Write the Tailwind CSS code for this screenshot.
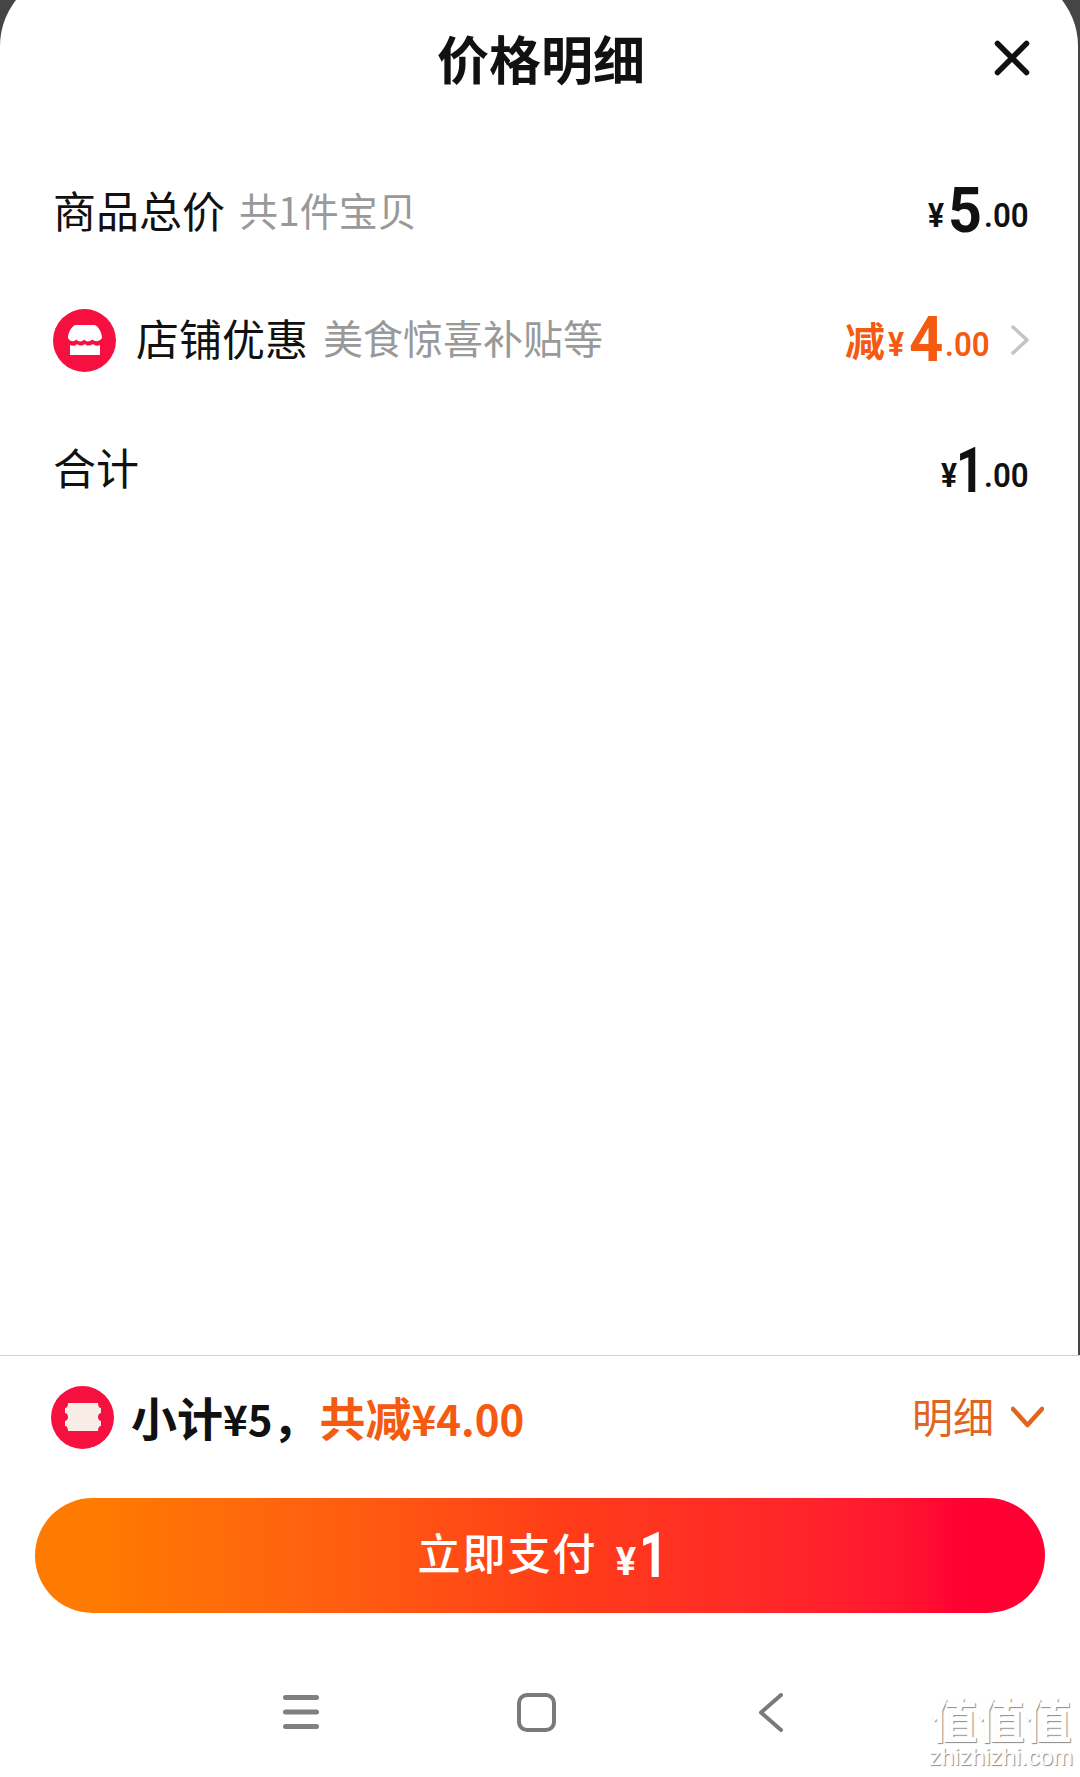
<!DOCTYPE html>
<html lang="zh">
<head>
<meta charset="utf-8">
<script src="https://cdn.jsdelivr.net/npm/@tailwindcss/browser@4"></script>
</head>
<body>
<div class="relative flex h-[1777px] w-[1080px] flex-col overflow-hidden bg-white font-['Noto_Sans_CJK_SC',sans-serif] text-[#111111]">
  <div class="h-[1355px] overflow-hidden bg-[#454545] pr-[2px]">
    <div class="mt-[-28px] flex h-[1383px] flex-col rounded-t-[74px] bg-white pt-[28px] pr-[50px] pl-[53px]">
      <header class="relative flex h-[122px] items-center justify-center pb-[6px]">
        <h1 class="ml-[1px] text-[52px] leading-none font-bold">价格明细</h1>
        <svg class="absolute top-[40px] right-[-2px] h-[36px] w-[36px]" viewBox="0 0 36 36" fill="none" stroke="#111111" stroke-width="5.500" stroke-linecap="round"><path d="M3.500 3.500 32.500 32.500M32.500 3.500 3.500 32.500"/></svg>
      </header>
      <div class="mt-[26px] flex h-[128px] items-center justify-between">
        <div class="flex items-center gap-[14px] pb-[6px]">
          <span class="text-[43px] leading-none">商品总价</span>
          <span class="text-[39px] leading-none text-[#999999]">共1件宝贝</span>
        </div>
        <div class="flex items-end pb-[3px] font-['Roboto',sans-serif] font-bold">
          <span class="mb-[10px] w-[16px] origin-left scale-x-[0.88] text-[34px] leading-none">¥</span>
          <span class="ml-[4px] w-[31px] origin-left scale-x-[0.94] text-[63px] leading-none">5</span>
          <span class="mb-[10px] ml-[5px] w-[44px] origin-left scale-x-[0.92] text-[34px] leading-none font-semibold whitespace-nowrap">.00</span>
        </div>
      </div>
      <div class="flex h-[128px] items-center justify-between">
        <div class="flex items-center">
          <div class="flex h-[63px] w-[63px] items-center justify-center rounded-full bg-[#f5103f]">
            <svg class="h-[36px] w-[36px]" viewBox="0 0 36 36" fill="#ffffff"><path d="M8 3H28C32 5 35 11 35 16 32 20 28 20 25.500 17.500 22 20 19 20 17.500 17.500 15 20 11 20 9.500 17.500 7 20 3 20 1 16 1 11 4 5 8 3Z"/><path d="M3 23C6 24 9 24 10 22 13 24 15 24 18 22 20 24 23 24 26 22 28 24 31 24 33 23V33H3Z"/></svg>
          </div>
          <div class="flex items-center pb-[6px]">
            <span class="ml-[20px] text-[43px] leading-none">店铺优惠</span>
            <span class="ml-[15px] text-[40px] leading-none text-[#999999]">美食惊喜补贴等</span>
          </div>
        </div>
        <div class="flex items-center">
          <div class="flex items-end pb-[2px] font-['Roboto',sans-serif] font-bold text-[#f45a10]">
            <span class="mb-[12px] font-['Noto_Sans_CJK_SC',sans-serif] text-[40px] leading-none">减</span>
            <span class="mb-[10px] ml-[3px] w-[17px] origin-left scale-x-[0.88] text-[34px] leading-none">¥</span>
            <span class="ml-[4px] w-[31px] origin-left scale-x-[0.95] text-[63px] leading-none">4</span>
            <span class="mb-[10px] ml-[5px] w-[44px] origin-left scale-x-[0.92] text-[34px] leading-none font-semibold whitespace-nowrap">.00</span>
          </div>
          <svg class="mr-[-2px] ml-[21px] h-[30px] w-[20px]" viewBox="0 0 20 30" fill="none" stroke="#c4c4c4" stroke-width="3.500" stroke-linecap="round" stroke-linejoin="round"><path d="M3 2 17 15 3 28"/></svg>
        </div>
      </div>
      <div class="flex h-[128px] items-center justify-between">
        <span class="pb-[4px] text-[43px] leading-none">合计</span>
        <div class="flex items-end pt-[4px] font-['Roboto',sans-serif] font-bold">
          <span class="mb-[10px] w-[15px] origin-left scale-x-[0.88] text-[34px] leading-none">¥</span>
          <span class="w-[28px] origin-left scale-x-[0.78] text-[63px] leading-none">1</span>
          <span class="mb-[10px] w-[44px] origin-left scale-x-[0.92] text-[34px] leading-none font-semibold whitespace-nowrap">.00</span>
        </div>
      </div>
    </div>
  </div>
  <div class="h-px bg-[#d2d2d2]"></div>
  <div class="flex h-[122px] items-center justify-between pr-[36px] pl-[51px]">
    <div class="flex items-center">
      <div class="flex h-[63px] w-[63px] items-center justify-center rounded-full bg-[#f5103f]">
        <svg class="h-[28px] w-[36px]" viewBox="0 0 36 28" fill="#f8ece6"><path d="M3 0H33C33 3 34 5 36 5V10C32 11 32 17 36 18V23C34 23 33 25 33 28H3C3 25 2 23 0 23V18C4 17 4 11 0 10V5C2 5 3 3 3 0Z"/></svg>
      </div>
      <div class="ml-[17px] flex items-baseline pb-[2px] text-[46px] leading-none font-bold">
        <span>小计</span><span class="text-[42px]">¥5</span><span class="mr-[1px]">，</span>
        <span class="text-[#f45a10]">共减</span><span class="text-[42px] text-[#f45a10]">¥4.00</span>
      </div>
    </div>
    <div class="flex items-center text-[#e0651f]">
      <span class="pb-[4px] text-[41px] leading-none">明细</span>
      <svg class="ml-[17px] h-[22px] w-[33px]" viewBox="0 0 33 22" fill="none" stroke="#e0651f" stroke-width="4.500" stroke-linecap="round" stroke-linejoin="round"><path d="M2 3 16.500 19 31 3"/></svg>
    </div>
  </div>
  <button class="mx-[35px] mt-[20px] flex h-[115px] w-[1010px] items-center justify-center rounded-full bg-gradient-to-r from-[#ff7a00] from-[6%] via-[#ff3c18] via-[52%] to-[#ff0033] to-[92%] text-white">
    <span class="pb-[8px] text-[43px] leading-none font-medium tracking-[2px]">立即支付</span>
    <div class="ml-[16px] flex items-end font-['Roboto',sans-serif] font-bold">
      <span class="mb-[6px] w-[25px] origin-left text-[38px] leading-none">¥</span>
      <span class="w-[24px] origin-left scale-x-[0.8] text-[63px] leading-none">1</span>
    </div>
  </button>
  <nav class="flex items-start pt-[80px] pl-[283px]">
    <svg class="h-[36px] w-[36px]" viewBox="0 0 36 36" fill="#808080"><rect y="2" width="36" height="5" rx="2.500"/><rect y="16.500" width="36" height="5" rx="2.500"/><rect y="31" width="36" height="5" rx="2.500"/></svg>
    <svg class="ml-[198px] h-[39px] w-[39px]" viewBox="0 0 39 39" fill="none" stroke="#7a7a7a" stroke-width="4"><rect x="2" y="2" width="35" height="35" rx="8"/></svg>
    <svg class="ml-[202px] h-[39px] w-[25px]" viewBox="0 0 25 39" fill="none" stroke="#7a7a7a" stroke-width="4" stroke-linecap="round" stroke-linejoin="round"><path d="M23 2 3 19.500 23 37"/></svg>
  </nav>
  <div class="absolute top-[1695px] left-[930px] flex w-[142px] flex-col items-center font-bold text-white [text-shadow:1px_1px_1px_#8a8a8a]">
    <span class="text-[47px] leading-[46px] whitespace-nowrap">值值值</span>
    <span class="mt-[4px] font-['Liberation_Sans',sans-serif] text-[24px] leading-[24px] font-normal">zhizhizhi.com</span>
  </div>
</div>
</body>
</html>
